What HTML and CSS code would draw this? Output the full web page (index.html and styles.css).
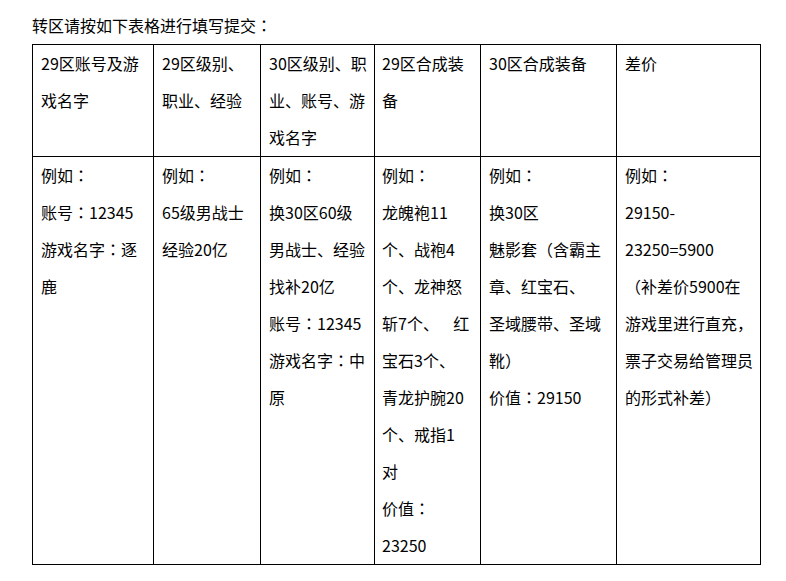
FILE: index.html
```html
<!DOCTYPE html>
<html lang="zh-CN">
<head>
<meta charset="utf-8">
<title>转区</title>
<link rel="stylesheet" href="styles.css">
</head>
<body>
<div class="page">
  <p class="intro">转区请按如下表格进行填写提交<span class="colon" lang="zh-TW">：</span></p>
  <table class="form-table">
    <colgroup>
      <col class="c1"><col class="c2"><col class="c3"><col class="c4"><col class="c5"><col class="c6">
    </colgroup>
    <tr>
      <td>29区账号及游<br>戏名字</td>
      <td>29区级别、<br>职业、经验</td>
      <td>30区级别、职<br>业、账号、游<br>戏名字</td>
      <td class="tight">29区合成装<br>备</td>
      <td>30区合成装备</td>
      <td>差价</td>
    </tr>
    <tr>
      <td>例如<span class="colon" lang="zh-TW">：</span><br>账号<span class="colon" lang="zh-TW">：</span>12345<br>游戏名字<span class="colon" lang="zh-TW">：</span>逐<br>鹿</td>
      <td>例如<span class="colon" lang="zh-TW">：</span><br>65级男战士<br>经验20亿</td>
      <td>例如<span class="colon" lang="zh-TW">：</span><br>换30区60级<br>男战士、经验<br>找补20亿<br>账号<span class="colon" lang="zh-TW">：</span>12345<br>游戏名字<span class="colon" lang="zh-TW">：</span>中<br>原</td>
      <td class="tight">例如<span class="colon" lang="zh-TW">：</span><br>龙魄袍11<br>个、战袍4<br>个、龙神怒<br>斩7个、&nbsp;&nbsp;&nbsp; 红<br>宝石3个、<br>青龙护腕20<br>个、戒指1<br>对<br>价值<span class="colon" lang="zh-TW">：</span><br>23250</td>
      <td>例如<span class="colon" lang="zh-TW">：</span><br>换30区<br>魅影套（含霸主<br>章、红宝石、<br>圣域腰带、圣域<br>靴）<br>价值<span class="colon" lang="zh-TW">：</span>29150</td>
      <td>例如<span class="colon" lang="zh-TW">：</span><br>29150-<br>23250=5900<br>（补差价5900在<br>游戏里进行直充，<br>票子交易给管理员<br>的形式补差）</td>
    </tr>
  </table>
</div>
</body>
</html>
```

FILE: styles.css
```css
html, body {
  margin: 0;
  padding: 0;
  background: #fff;
}

.page {
  padding: 13px 0 0 32px;
  font-family: "Noto Sans CJK SC", "Noto Sans", sans-serif;
  font-size: 16px;
  color: #000;
  text-spacing-trim: space-all;
}

.intro {
  margin: 0 0 7px 0;
  line-height: 24px;
}

.colon {
  font-family: "Noto Sans CJK TC", "Noto Sans CJK SC", sans-serif;
}

.form-table {
  border-collapse: collapse;
  table-layout: fixed;
  width: 728px;
}

.form-table td {
  border: 1px solid #000;
  vertical-align: top;
  padding: 0 8px;
  line-height: 37px;
  white-space: nowrap;
  overflow: hidden;
}

.form-table td.tight {
  padding-left: 7px;
}

.c1 { width: 121px; }
.c2 { width: 107px; }
.c3 { width: 114px; }
.c4 { width: 106px; }
.c5 { width: 136px; }
.c6 { width: 144px; }
```
